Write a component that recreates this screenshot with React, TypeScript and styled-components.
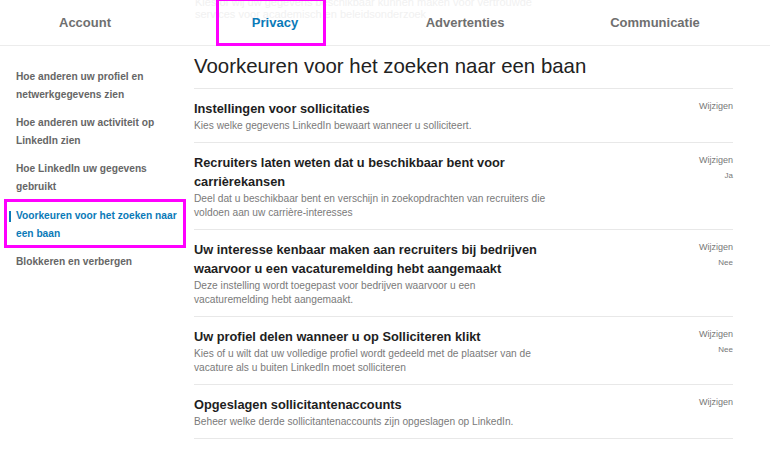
import styled, { createGlobalStyle } from "styled-components";

const tabs = ["Account", "Privacy", "Advertenties", "Communicatie"];

const sideItems = [
    "Hoe anderen uw profiel en netwerkgegevens zien",
    "Hoe anderen uw activiteit op LinkedIn zien",
    "Hoe LinkedIn uw gegevens gebruikt",
    "Voorkeuren voor het zoeken naar een baan",
    "Blokkeren en verbergen",
];

const settings = [
    {
        title: "Instellingen voor sollicitaties",
        text: "Kies welke gegevens LinkedIn bewaart wanneer u solliciteert.",
    },
    {
        title: "Recruiters laten weten dat u beschikbaar bent voor carrièrekansen",
        text: "Deel dat u beschikbaar bent en verschijn in zoekopdrachten van recruiters die voldoen aan uw carrière-interesses",
        value: "Ja",
    },
    {
        title: "Uw interesse kenbaar maken aan recruiters bij bedrijven waarvoor u een vacaturemelding hebt aangemaakt",
        text: "Deze instelling wordt toegepast voor bedrijven waarvoor u een vacaturemelding hebt aangemaakt.",
        value: "Nee",
    },
    {
        title: "Uw profiel delen wanneer u op Solliciteren klikt",
        text: "Kies of u wilt dat uw volledige profiel wordt gedeeld met de plaatser van de vacature als u buiten LinkedIn moet solliciteren",
        value: "Nee",
    },
    {
        title: "Opgeslagen sollicitantenaccounts",
        text: "Beheer welke derde sollicitantenaccounts zijn opgeslagen op LinkedIn.",
    },
];

const App = () => {
    return <Page>
        <GlobalStyle />
        <Header>
            <Ghost>
                Kies of wij uw gegevens beschikbaar kunnen maken voor vertrouwde services voor academisch en beleidsonderzoek
            </Ghost>
            <TabRow>
                {tabs.map(t => <Tab key={t} $active={t === "Privacy"}>{t}</Tab>)}
            </TabRow>
            <Highlight $left={216} $top={-2} $width={110} $height={48} />
        </Header>
        <Body>
            <Sidebar>
                {sideItems.map((s, i) => <SideItem key={s} $active={i === 3}>{s}</SideItem>)}
                <Highlight $left={4} $top={153} $width={182} $height={49} />
            </Sidebar>
            <Main>
                <Title>Voorkeuren voor het zoeken naar een baan</Title>
                <SettingList>
                    {settings.map(s => (<SettingRow key={s.title}>
                        <SettingText>
                            <SettingTitle>{s.title}</SettingTitle>
                            <SettingDescription>{s.text}</SettingDescription>
                        </SettingText>
                        <SettingActions>
                            <EditLink>Wijzigen</EditLink>
                            {s.value && <SettingValue>{s.value}</SettingValue>}
                        </SettingActions>
                    </SettingRow>))}
                </SettingList>
            </Main>
        </Body>
    </Page>
}

export default App;

const GlobalStyle = createGlobalStyle`
    body {
        margin: 0;
        background: #fff;
        font-family: "Liberation Sans", Arial, sans-serif;
    }
`;

const Page = styled.div`
    width: 770px;
    height: 449px;
    overflow: hidden;
`;

const Header = styled.div`
    position: relative;
    height: 45px;
    border-bottom: 1px solid #ececec;
`;

const Ghost = styled.div`
    position: absolute;
    left: 195px;
    top: -3px;
    width: 345px;
    font-size: 11px;
    line-height: 11.5px;
    color: #f1f1f1;
`;

const TabRow = styled.div`
    position: relative;
    display: grid;
    grid-template-columns: repeat(4, 190px);
    margin-left: -10px;
    height: 100%;
`;

const Tab = styled.div<{ $active?: boolean }>`
    display: flex;
    align-items: center;
    justify-content: center;
    padding-bottom: 1px;
    font-size: 13px;
    font-weight: 700;
    color: ${p => p.$active ? "#0a7ab8" : "#6f6f6f"};
`;

const Highlight = styled.div<{ $left: number; $top: number; $width: number; $height: number }>`
    position: absolute;
    left: ${p => p.$left}px;
    top: ${p => p.$top}px;
    width: ${p => p.$width}px;
    height: ${p => p.$height}px;
    box-sizing: border-box;
    border: 3px solid #ff00ff;
    pointer-events: none;
`;

const Body = styled.div`
    display: grid;
    grid-template-columns: 194px 539px;
`;

const Sidebar = styled.div`
    position: relative;
    display: flex;
    flex-direction: column;
    gap: 10.2px;
    padding: 22px 0 0 16px;
`;

const SideItem = styled.div<{ $active?: boolean }>`
    position: relative;
    width: 168px;
    font-size: 10.2px;
    font-weight: 700;
    line-height: 18px;
    color: ${p => p.$active ? "#0a7ab8" : "#666"};

    &::before {
        content: "";
        display: ${p => p.$active ? "block" : "none"};
        position: absolute;
        left: -7px;
        top: 4px;
        width: 2px;
        height: 11px;
        background: #0a7ab8;
    }
`;

const Main = styled.div`
    padding-top: 8px;
`;

const Title = styled.h1`
    margin: 0;
    font-size: 20.4px;
    font-weight: 400;
    line-height: 24px;
    color: #222;
    padding-bottom: 10px;
`;

const SettingList = styled.div`
    border-bottom: 1px solid #e8e8e8;
`;

const SettingRow = styled.div`
    display: grid;
    grid-template-columns: 1fr auto;
    border-top: 1px solid #e8e8e8;
    padding: 10px 0 9px;
`;

const SettingText = styled.div`
    max-width: 356px;
`;

const SettingTitle = styled.div`
    font-size: 12.8px;
    font-weight: 700;
    line-height: 19px;
    color: #1e1e1e;
`;

const SettingDescription = styled.div`
    margin-top: 1px;
    font-size: 10.2px;
    line-height: 14px;
    color: #7a7a7a;
`;

const SettingActions = styled.div`
    display: flex;
    flex-direction: column;
    align-items: flex-end;
`;

const EditLink = styled.div`
    font-size: 9px;
    line-height: 14px;
    color: #777;
`;

const SettingValue = styled.div`
    margin-top: 4px;
    font-size: 8px;
    line-height: 10px;
    color: #777;
`;
